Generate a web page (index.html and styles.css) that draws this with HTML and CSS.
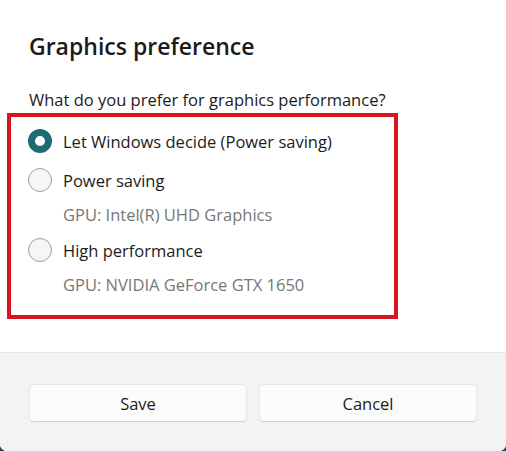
FILE: index.html
```html
<!DOCTYPE html>
<html lang="en">
<head>
<meta charset="utf-8">
<title>Graphics preference</title>
<link rel="stylesheet" href="styles.css">
</head>
<body>
<div class="dialog">
  <div class="content">
    <h1 class="title">Graphics preference</h1>
    <p class="question">What do you prefer for graphics performance?</p>
    <div class="options">
      <div class="option option-first">
        <span class="radio radio-checked"></span>
        <div class="text">
          <div class="label">Let Windows decide (Power saving)</div>
        </div>
      </div>
      <div class="option option-second">
        <span class="radio"></span>
        <div class="text">
          <div class="label">Power saving</div>
          <div class="sub">GPU: Intel(R) UHD Graphics</div>
        </div>
      </div>
      <div class="option option-third">
        <span class="radio"></span>
        <div class="text">
          <div class="label">High performance</div>
          <div class="sub">GPU: NVIDIA GeForce GTX 1650</div>
        </div>
      </div>
    </div>
  </div>
  <div class="footer">
    <button class="btn">Save</button>
    <button class="btn">Cancel</button>
  </div>
</div>
</body>
</html>
```
FILE: styles.css
```css
html {
  background: #2a4552;
}
body {
  margin: 0;
  font-family: "Open Sans", "Noto Sans", sans-serif;
  color: #1b1b1b;
}
.dialog {
  width: 506px;
  height: 451px;
  background: #ffffff;
  border-radius: 0 0 7px 7px;
  overflow: hidden;
  display: flex;
  flex-direction: column;
}
.content {
  padding: 31px 0 33px 0;
}
.title {
  margin: 0 0 0 29px;
  font-size: 23px;
  line-height: 30px;
  font-weight: 600;
  color: #1b1b1b;
}
.question {
  margin: 28px 0 2px 29px;
  font-size: 16.5px;
  line-height: 22px;
  color: #1b1b1b;
}
.options {
  margin-left: 7px;
  width: 366px;
  border: 4px solid #d8141d;
  padding: 12px 0 19px 17px;
  box-sizing: content-box;
}
.option {
  display: flex;
  align-items: flex-start;
  gap: 11px;
}
.option-second {
  margin-top: 14px;
}
.option-third {
  margin-top: 12px;
}
.radio {
  flex: none;
  width: 24px;
  height: 24px;
  border-radius: 50%;
  box-sizing: border-box;
  border: 1.5px solid #9a9a9a;
  background: #f6f6f6;
}
.radio-checked {
  border: 7px solid #1f6b74;
  background: #ffffff;
}
.label {
  font-size: 16.5px;
  line-height: 24px;
  margin-top: 1px;
  color: #1b1b1b;
}
.sub {
  font-size: 16.5px;
  line-height: 22px;
  margin-top: 11px;
  color: #777777;
}
.footer {
  flex: 1;
  background: #f3f3f3;
  border-top: 1px solid #e3e3e3;
  padding: 31px 29px 0 29px;
  display: flex;
  gap: 12px;
  align-items: flex-start;
}
.btn {
  flex: 1;
  height: 38px;
  background: #fbfbfb;
  border: 1px solid #e6e6e6;
  border-bottom-color: #d2d2d2;
  border-radius: 4px;
  font-family: "Open Sans", "Noto Sans", sans-serif;
  font-size: 16.5px;
  color: #1b1b1b;
  padding: 0;
}
```
